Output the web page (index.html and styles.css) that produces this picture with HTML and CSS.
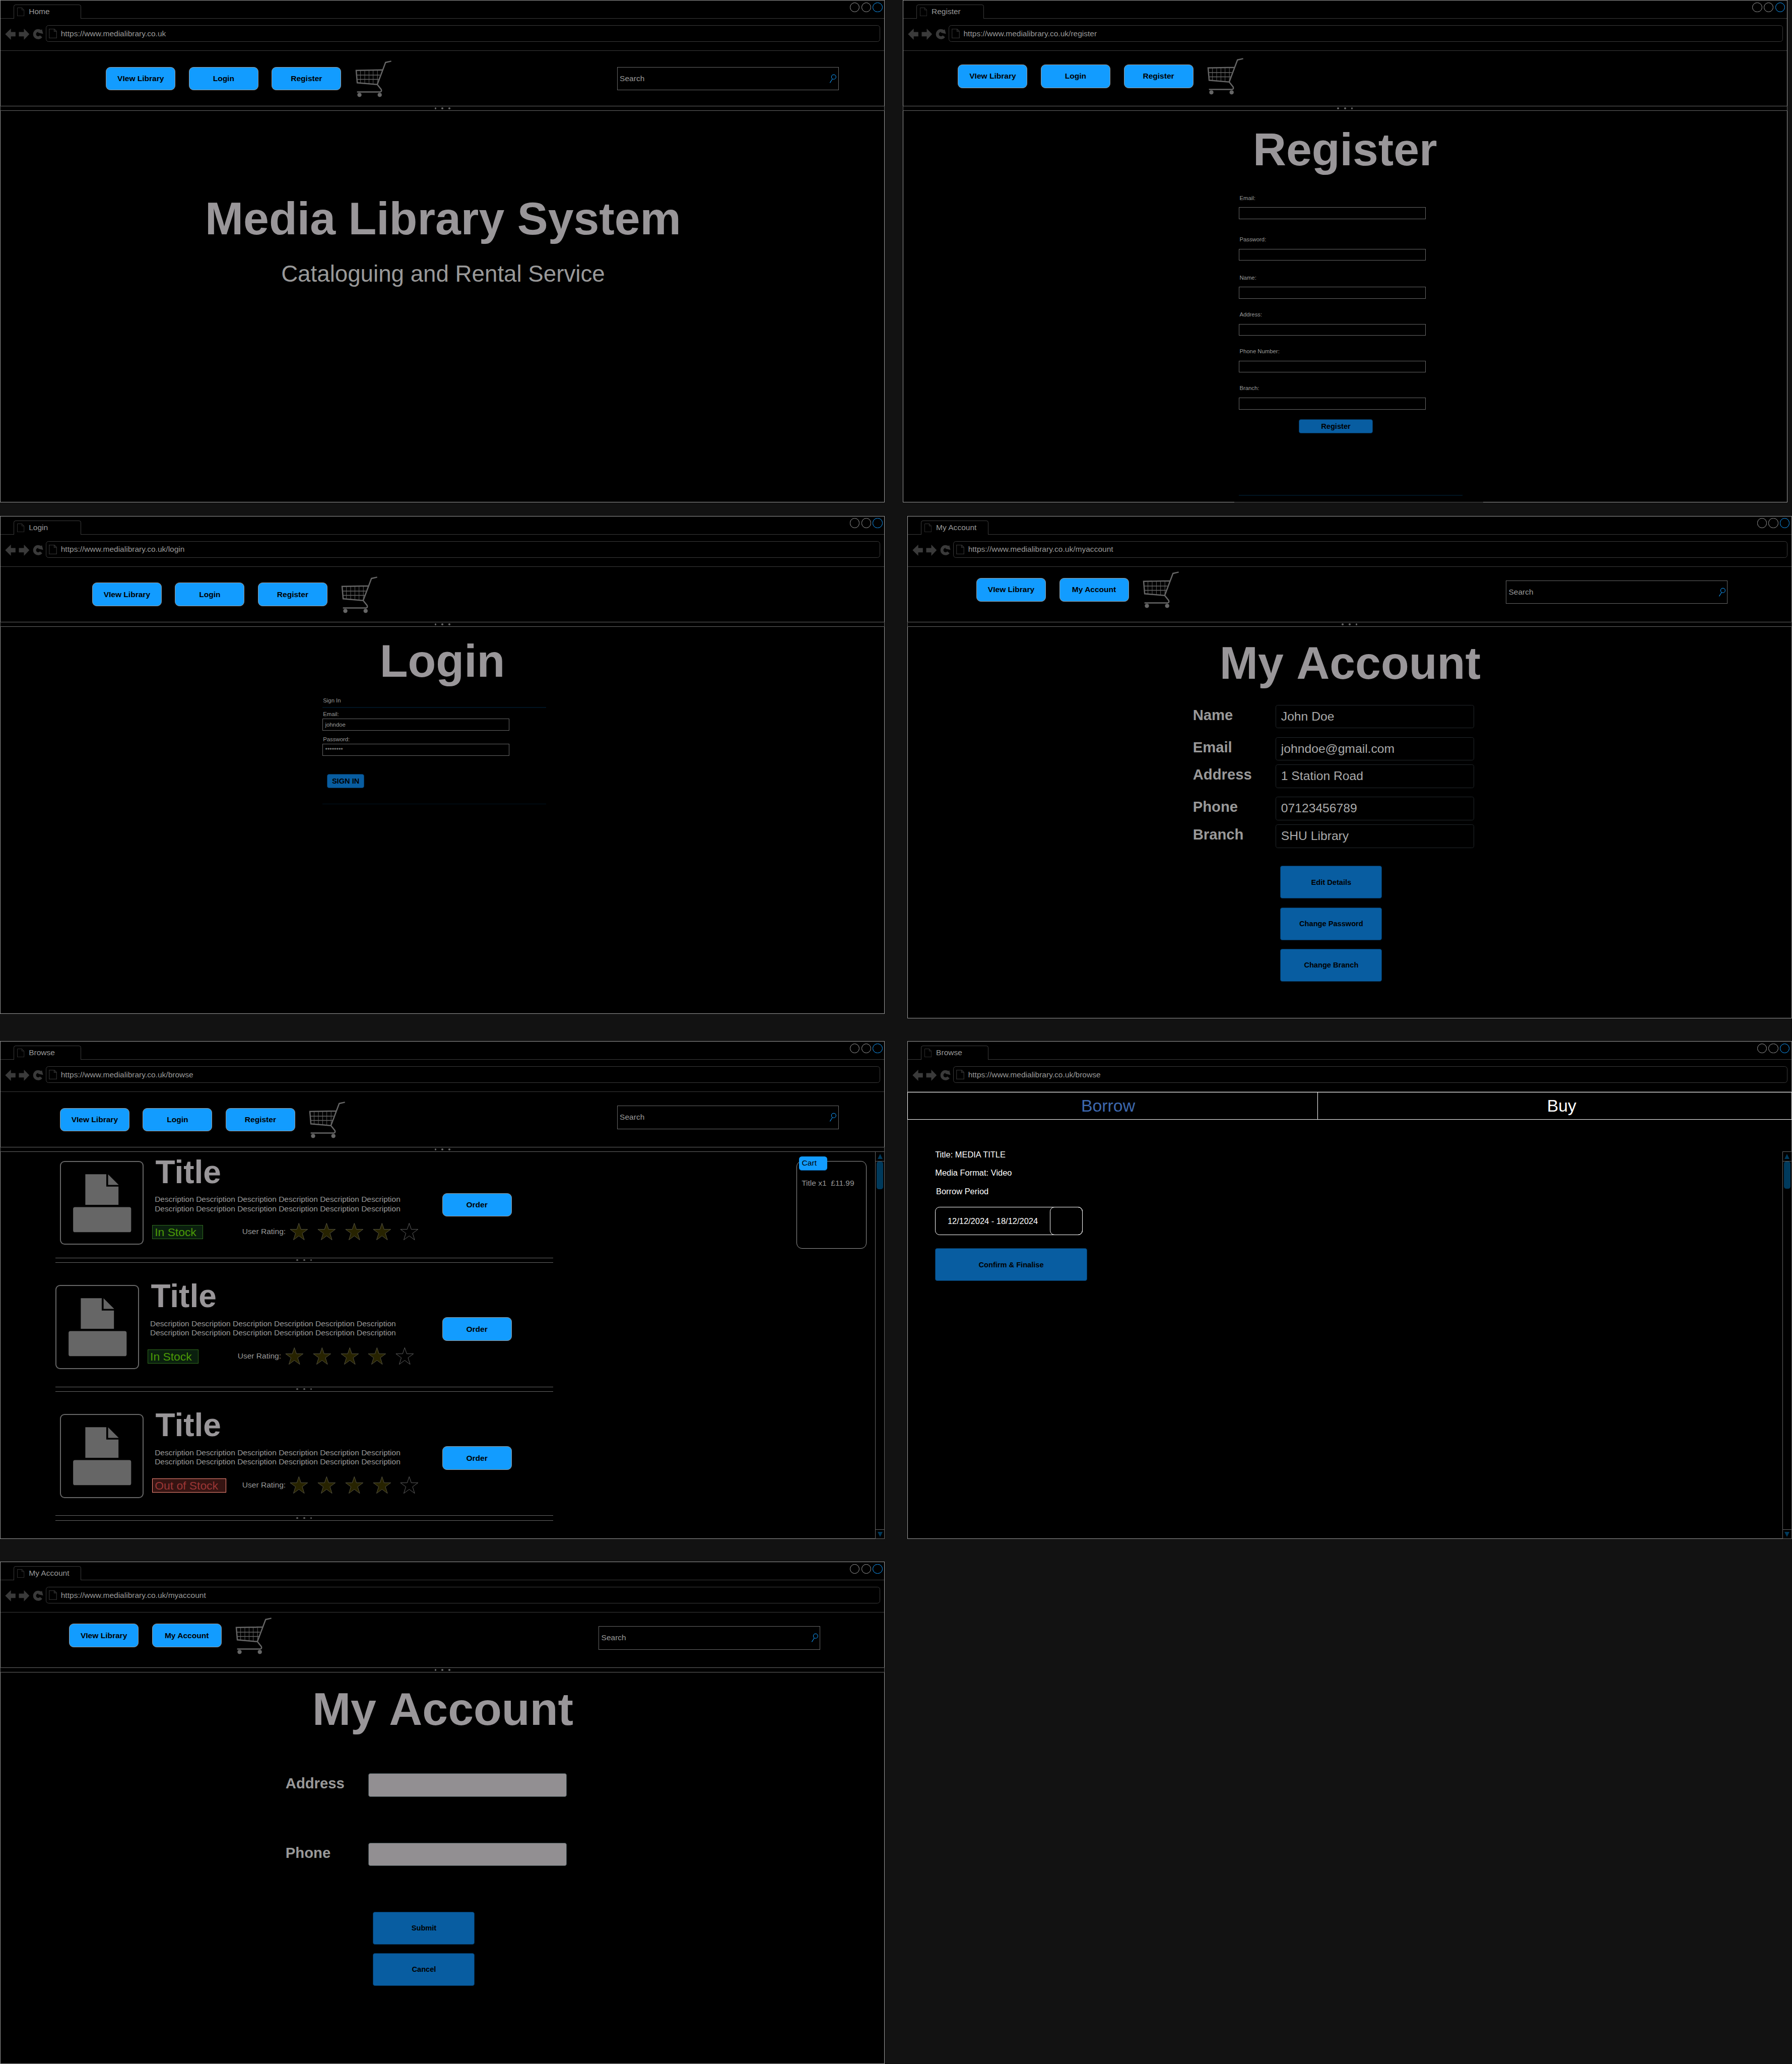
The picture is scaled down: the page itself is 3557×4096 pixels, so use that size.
FILE: index.html
```html
<!DOCTYPE html>
<html lang="en">
<head>
<meta charset="utf-8">
<title>Media Library System</title>
<link rel="stylesheet" href="styles.css">
</head>
<body>
<svg class="sprite" aria-hidden="true">
  <symbol id="page" viewBox="0 0 17 20"><path d="M.5 .5H11L16 5.500V19.300H.5ZM11 .5V5.500H16"/></symbol>
  <symbol id="controls" viewBox="0 0 100 36">
    <path d="M11.300 19.500 23.700 7.300V14.700H33.700V24.300H23.700V31.700ZM63.700 19.500 52 7.300V14.700H41V24.300H52V31.700ZM91 8.700 93.700 19 82.300 16Z"/>
    <path class="ring" d="M88.500 14A7.800 7.800 0 1 0 89.200 24"/>
  </symbol>
  <symbol id="cart" viewBox="0 0 80 80">
    <g fill="none">
      <path stroke-width="1" d="M11.600 22V50.500M20.800 22V51M30 22V51.500M39 21V52M48.400 21V52"/>
      <path stroke-width="1.800" d="M3 31.700H54M3.500 41H52"/>
      <path stroke-width="2.700" d="M78.400 1.500 66 4.300 48 52.300 4.500 48.500 2.200 21.500 59 20.500M48 52.300 56.300 62.500Q58.500 67 54.500 68.300H4"/>
    </g>
    <circle cx="9.300" cy="74.800" r="4.500" stroke="none"/><circle cx="53.300" cy="74.800" r="4.500" stroke="none"/>
  </symbol>
  <symbol id="lens" viewBox="0 0 16 20"><circle cx="9.700" cy="6.300" r="4.900"/><path d="M7 10.500 1.500 19"/></symbol>
  <symbol id="star" viewBox="0 0 40 40"><path d="M20 .5 24.500 13.800H39L27.300 22.400 31.800 36.700 20 28 8.200 36.700 12.700 22.400 1 13.800H15.500Z"/></symbol>
  <symbol id="media" viewBox="0 0 180 180"><path d="M54 27.500H99.500V54.500H126V94H54ZM103.500 28 126.500 51H103.500Z"/><rect x="27.500" y="99" width="126" height="54.500" rx="4"/></symbol>
</svg>

<main class="canvas">

<section class="window home">
  <div class="tabs"><div class="tab"><svg class="tab-page"><use href="#page"/></svg>Home</div><div class="dots"><i></i><i></i><i class="close"></i></div></div>
  <div class="address"><svg class="controls"><use href="#controls"/></svg><div class="url"><svg class="url-page"><use href="#page"/></svg>https://www.medialibrary.co.uk</div></div>
  <nav class="nav">
    <a class="btn">VIew Library</a><a class="btn">Login</a><a class="btn">Register</a><svg class="cart"><use href="#cart"/></svg>
    <div class="search">Search<svg class="lens"><use href="#lens"/></svg></div>
  </nav>
  <div class="splitter"><i></i><i></i><i></i></div>
  <h1>Media Library System</h1>
  <p class="subtitle">Cataloguing and Rental Service</p>
</section>

<section class="window register">
  <div class="tabs"><div class="tab"><svg class="tab-page"><use href="#page"/></svg>Register</div><div class="dots"><i></i><i></i><i class="close"></i></div></div>
  <div class="address"><svg class="controls"><use href="#controls"/></svg><div class="url"><svg class="url-page"><use href="#page"/></svg>https://www.medialibrary.co.uk/register</div></div>
  <nav class="nav">
    <a class="btn">VIew Library</a><a class="btn">Login</a><a class="btn">Register</a><svg class="cart"><use href="#cart"/></svg>
  </nav>
  <div class="splitter"><i></i><i></i><i></i></div>
  <h1>Register</h1>
  <form class="form">
    <label>Email:</label><div class="input"></div>
    <label class="gap-l">Password:</label><div class="input"></div>
    <label class="gap-m">Name:</label><div class="input"></div>
    <label class="gap-s">Address:</label><div class="input"></div>
    <label class="gap-s">Phone Number:</label><div class="input"></div>
    <label class="gap-s">Branch:</label><div class="input"></div>
    <div class="action">Register</div>
    <div class="rule"></div>
  </form>
  <div class="panel-edge"></div>
</section>

<section class="window login">
  <div class="tabs"><div class="tab"><svg class="tab-page"><use href="#page"/></svg>Login</div><div class="dots"><i></i><i></i><i class="close"></i></div></div>
  <div class="address"><svg class="controls"><use href="#controls"/></svg><div class="url"><svg class="url-page"><use href="#page"/></svg>https://www.medialibrary.co.uk/login</div></div>
  <nav class="nav">
    <a class="btn">VIew Library</a><a class="btn">Login</a><a class="btn">Register</a><svg class="cart"><use href="#cart"/></svg>
  </nav>
  <div class="splitter"><i></i><i></i><i></i></div>
  <h1>Login</h1>
  <form class="form">
    <div class="legend">Sign In</div>
    <div class="rule"></div>
    <label>Email:</label><div class="input">johndoe</div>
    <label class="second">Password:</label><div class="input">********</div>
    <div class="action">SIGN IN</div>
    <div class="rule last"></div>
  </form>
</section>

<section class="window account">
  <div class="tabs"><div class="tab"><svg class="tab-page"><use href="#page"/></svg>My Account</div><div class="dots"><i></i><i></i><i class="close"></i></div></div>
  <div class="address"><svg class="controls"><use href="#controls"/></svg><div class="url"><svg class="url-page"><use href="#page"/></svg>https://www.medialibrary.co.uk/myaccount</div></div>
  <nav class="nav">
    <a class="btn">VIew Library</a><a class="btn">My Account</a><svg class="cart"><use href="#cart"/></svg>
    <div class="search">Search<svg class="lens"><use href="#lens"/></svg></div>
  </nav>
  <div class="splitter"><i></i><i></i><i></i></div>
  <h1>My Account</h1>
  <div class="details">
    <div class="row"><b>Name</b><span class="value">John Doe</span></div>
    <div class="row wide"><b>Email</b><span class="value">johndoe@gmail.com</span></div>
    <div class="row"><b>Address</b><span class="value">1 Station Road</span></div>
    <div class="row wide"><b>Phone</b><span class="value">07123456789</span></div>
    <div class="row"><b>Branch</b><span class="value">SHU Library</span></div>
  </div>
  <div class="stack"><div class="big">Edit Details</div><div class="big">Change Password</div><div class="big">Change Branch</div></div>
</section>

<section class="window browse">
  <div class="tabs"><div class="tab"><svg class="tab-page"><use href="#page"/></svg>Browse</div><div class="dots"><i></i><i></i><i class="close"></i></div></div>
  <div class="address"><svg class="controls"><use href="#controls"/></svg><div class="url"><svg class="url-page"><use href="#page"/></svg>https://www.medialibrary.co.uk/browse</div></div>
  <nav class="nav">
    <a class="btn">VIew Library</a><a class="btn">Login</a><a class="btn">Register</a><svg class="cart"><use href="#cart"/></svg>
    <div class="search">Search<svg class="lens"><use href="#lens"/></svg></div>
  </nav>
  <div class="splitter"><i></i><i></i><i></i></div>
  <div class="content">
    <div class="list">
      <article class="item">
        <div class="thumb"><svg><use href="#media"/></svg></div>
        <div class="info">
          <h2>Title</h2>
          <p>Description Description Description Description Description Description<br>Description Description Description Description Description Description</p>
          <div class="meta"><div><span class="stock in">In Stock</span></div><span class="rating">User Rating:</span><div class="stars"><svg><use href="#star"/></svg><svg><use href="#star"/></svg><svg><use href="#star"/></svg><svg><use href="#star"/></svg><svg class="empty"><use href="#star"/></svg></div></div>
        </div>
        <a class="btn order">Order</a>
      </article>
      <div class="divider first"><i></i><i></i><i></i></div>
      <article class="item shifted">
        <div class="thumb"><svg><use href="#media"/></svg></div>
        <div class="info">
          <h2>Title</h2>
          <p>Description Description Description Description Description Description<br>Description Description Description Description Description Description</p>
          <div class="meta"><div><span class="stock in">In Stock</span></div><span class="rating">User Rating:</span><div class="stars"><svg><use href="#star"/></svg><svg><use href="#star"/></svg><svg><use href="#star"/></svg><svg><use href="#star"/></svg><svg class="empty"><use href="#star"/></svg></div></div>
        </div>
        <a class="btn order">Order</a>
      </article>
      <div class="divider"><i></i><i></i><i></i></div>
      <article class="item">
        <div class="thumb"><svg><use href="#media"/></svg></div>
        <div class="info">
          <h2>Title</h2>
          <p>Description Description Description Description Description Description<br>Description Description Description Description Description Description</p>
          <div class="meta"><div><span class="stock out">Out of Stock</span></div><span class="rating">User Rating:</span><div class="stars"><svg><use href="#star"/></svg><svg><use href="#star"/></svg><svg><use href="#star"/></svg><svg><use href="#star"/></svg><svg class="empty"><use href="#star"/></svg></div></div>
        </div>
        <a class="btn order">Order</a>
      </article>
      <div class="divider"><i></i><i></i><i></i></div>
    </div>
    <aside class="basket"><span class="tag">Cart</span>Title x1&nbsp; £11.99</aside>
    <div class="scroll"><div class="cap up"></div><div class="thumb-bar"></div><div class="cap down"></div></div>
  </div>
</section>

<section class="window borrow">
  <div class="tabs"><div class="tab"><svg class="tab-page"><use href="#page"/></svg>Browse</div><div class="dots"><i></i><i></i><i class="close"></i></div></div>
  <div class="address"><svg class="controls"><use href="#controls"/></svg><div class="url"><svg class="url-page"><use href="#page"/></svg>https://www.medialibrary.co.uk/browse</div></div>
  <div class="modes"><div class="mode active">Borrow</div><div class="mode buy">Buy</div></div>
  <div class="content">
    <div class="loan">
      <p>Title: MEDIA TITLE</p>
      <p>Media Format: Video</p>
      <p class="period">Borrow Period</p>
      <div class="date"><span>12/12/2024 - 18/12/2024</span><i></i></div>
      <div class="big">Confirm &amp; Finalise</div>
    </div>
    <div class="scroll"><div class="cap up"></div><div class="thumb-bar"></div><div class="cap down"></div></div>
  </div>
</section>

<section class="window edit">
  <div class="tabs"><div class="tab"><svg class="tab-page"><use href="#page"/></svg>My Account</div><div class="dots"><i></i><i></i><i class="close"></i></div></div>
  <div class="address"><svg class="controls"><use href="#controls"/></svg><div class="url"><svg class="url-page"><use href="#page"/></svg>https://www.medialibrary.co.uk/myaccount</div></div>
  <nav class="nav">
    <a class="btn">VIew Library</a><a class="btn">My Account</a><svg class="cart"><use href="#cart"/></svg>
    <div class="search">Search<svg class="lens"><use href="#lens"/></svg></div>
  </nav>
  <div class="splitter"><i></i><i></i><i></i></div>
  <h1>My Account</h1>
  <div class="details">
    <div class="row"><b>Address</b><span class="value"></span></div>
    <div class="row"><b>Phone</b><span class="value"></span></div>
  </div>
  <div class="stack"><div class="big">Submit</div><div class="big">Cancel</div></div>
</section>

</main>
</body>
</html>
```

FILE: styles.css
```css
/* 1rem is ten design units */
html { font-size: 9.1416px; background: #121212; }
* { box-sizing: border-box; }
body { margin: 0; color: #999; font: 1.7rem/2rem "Liberation Sans", Arial, sans-serif; }
h1, h2, p { margin: 0; }
i { display: block; }
svg { display: block; flex: none; }
.sprite { position: absolute; width: 0; height: 0; }
.canvas { position: relative; width: 3557px; height: 4096px; overflow: hidden; }

/* windows placed on the board */
.window { position: absolute; width: 192.1rem; height: 109.1rem; background: #000; outline: 1px solid #999; outline-offset: -1px; display: flex; flex-direction: column; }
.home { left: 0; top: 0; --nav-x: 23rem; --nav-y: 3.4rem; --search-y: 3.4rem; --search-r: 10rem; }
.register { left: 196rem; top: 0; --nav-x: 12rem; --nav-y: 2.9rem; }
.login { left: 0; top: 112rem; height: 108.1rem; --nav-x: 20rem; --nav-y: 3.4rem; }
.account { left: 197rem; top: 112rem; --nav-x: 15rem; --nav-y: 2.4rem; --search-y: 2.9rem; --search-r: 14rem; }
.browse { left: 0; top: 226rem; height: 108.1rem; --nav-x: 13rem; --nav-y: 3.4rem; --search-y: 2.9rem; --search-r: 10rem; }
.borrow { left: 197rem; top: 226rem; height: 108.1rem; }
.edit { left: 0; top: 339rem; --nav-x: 15rem; --nav-y: 2.4rem; --search-y: 2.9rem; --search-r: 14rem; }

/* browser chrome */
.tabs { flex: none; height: 4.1rem; padding: 0 .5rem 0 3rem; border-bottom: 1px solid #3a3a3a; display: flex; justify-content: space-between; }
.tab { width: 14.6rem; height: 3.1rem; margin-top: 1rem; padding: 0 0 .1rem .6rem; border: 1px solid #3a3a3a; border-bottom: 0; border-radius: .5rem .5rem 0 0; background: #000; display: flex; align-items: center; gap: .95rem; }
.tab-page { width: 1.6rem; height: 1.9rem; margin-top: .1rem; fill: none; stroke: #3a3a3a; stroke-width: 1; }
.dots { display: flex; gap: .4rem; padding-top: .5rem; }
.dots i { width: 2.1rem; height: 2.1rem; border: 1px solid #999; border-radius: 50%; }
.dots .close { border-color: #129cff; }
.address { flex: none; height: 7rem; padding-top: 1.4rem; border-bottom: 1px solid #3a3a3a; display: flex; align-items: flex-start; }
.controls { width: 10rem; height: 3.6rem; fill: #3a3a3a; }
.ring { fill: none; stroke: #3a3a3a; stroke-width: 6.400; }
.url { width: 181.1rem; height: 3.6rem; padding: 0 0 0 .5rem; border: 1px solid #3a3a3a; border-radius: .6rem; display: flex; align-items: center; gap: .8rem; }
.url-page { width: 1.8rem; height: 2.1rem; fill: none; stroke: #2b2b2b; stroke-width: 1.700; }

.nav { flex: none; height: 11.9rem; padding-left: var(--nav-x); display: flex; gap: 2.9rem; align-items: flex-start; }
.btn { width: 15.1rem; height: 5.1rem; border: 1px solid #999; border-radius: 1rem; background: #129cff; color: #000; font-weight: bold; display: flex; align-items: center; justify-content: center; }
.nav .btn { margin-top: var(--nav-y); }
.cart { width: 8rem; height: 8rem; margin: calc(var(--nav-y) - 1.4rem) 0 0 .1rem; fill: #666; stroke: #666; }
.search { width: 48.1rem; height: 5.1rem; margin: var(--search-y) var(--search-r) 0 auto; padding: 0 .3rem 0 .45rem; border: 1px solid #666; display: flex; align-items: center; justify-content: space-between; }
.lens { width: 1.6rem; height: 2rem; fill: none; stroke: #129cff; stroke-width: 1.100; }

.splitter, .divider { display: flex; align-items: center; justify-content: center; gap: 1.1rem; height: 1.1rem; border: 1px solid #666; }
.splitter { flex: none; position: relative; z-index: 1; }
.splitter i, .divider i { width: .4rem; height: .4rem; border-radius: 50%; background: #666; }

h1 { font-size: 10rem; line-height: 12rem; text-align: center; color: #999699; font-kerning: none; }
.home h1 { margin-top: 17.4rem; padding-left: .3rem; }
.register h1 { margin-top: 2.4rem; }
.login h1 { margin-top: 1.4rem; }
.account h1, .edit h1 { margin-top: 1.9rem; padding-left: .2rem; }
.subtitle { margin-top: 3.1rem; padding-left: .3rem; font-size: 5rem; line-height: 6rem; text-align: center; }

/* small forms */
.form { font-size: 1.24rem; }
.form label, .legend { display: block; padding-left: .15rem; line-height: 2rem; }
.input { width: 40.6rem; height: 2.6rem; padding-left: .5rem; border: 1px solid #666; line-height: 2.5rem; }
.action { height: 3.1rem; border: 1px solid #06355c; border-radius: .5rem; background: #085da1; color: #000; font-weight: bold; font-size: 1.6rem; display: flex; align-items: center; justify-content: center; }
.rule { width: 48.6rem; height: .2rem; background: #001422; }
.register .form { margin: 3.5rem 0 0 73rem; }
.register .input { margin-top: 1rem; }
.register .gap-l { margin-top: 3.4rem; }
.register .gap-m { margin-top: 2.7rem; }
.register .gap-s { margin-top: 2.4rem; }
.register .action { width: 16.1rem; margin: 2.1rem 0 13.35rem 13rem; }
.panel-edge { position: absolute; z-index: 1; left: 72rem; bottom: 0; width: 54rem; height: 1px; background: #4d4d4d; }
.login .form { margin: 1.6rem 0 0 70rem; }
.login .rule { margin-top: .35rem; }
.login .form label { margin-top: .45rem; line-height: 1.9rem; }
.login .form .second { margin-top: 1rem; }
.login .action { width: 8.1rem; margin: 3.9rem 0 0 1rem; }
.login .last { margin-top: 3.35rem; }

/* account details */
.details { display: flex; flex-direction: column; padding-left: 62rem; }
.account .details { margin-top: 3rem; gap: .9rem; }
.account .wide { margin-top: 1rem; }
.edit .details { margin-top: 8rem; gap: 9.9rem; }
.row { display: flex; }
.row b { width: 18rem; font-size: 3.2rem; line-height: 4.4rem; }
.value { width: 43.1rem; height: 5.1rem; padding-left: 1.05rem; border: 1px solid #22272b; border-radius: .5rem; color: #aaa; font-size: 2.7rem; line-height: 4.9rem; }
.edit .value { background: #928f92; border-color: #3b4a4c; }
.stack { display: flex; flex-direction: column; gap: 1.9rem; margin: 3.9rem 0 0 81rem; }
.edit .stack { margin-top: 9.9rem; }
.big { width: 22.1rem; height: 7.1rem; border: 1px solid #06355c; border-radius: .5rem; background: #085da1; color: #000; font-weight: bold; font-size: 1.6rem; display: flex; align-items: center; justify-content: center; }

/* browse */
.content { flex: 1; display: flex; align-items: flex-start; }
.list { width: 120.1rem; padding-top: 1.9rem; }
.item { display: flex; padding-left: 13rem; }
.shifted { padding-left: 12rem; }
.thumb { width: 18.2rem; height: 18.2rem; margin: 0 -.1rem -.1rem 0; border: 2px solid #666; border-radius: 1rem; display: flex; align-items: center; justify-content: center; }
.thumb svg { width: 18rem; height: 18rem; fill: #666; }
.info { width: 62.5rem; margin-left: 2.4rem; }
.shifted .info { width: 63.5rem; }
.item h2 { margin-left: .25rem; font-size: 7rem; line-height: 5rem; color: #999699; }
.item p { margin-top: 2.4rem; padding-left: .1rem; white-space: nowrap; }
.meta { display: grid; grid-template-columns: 19.5rem 10.4rem auto; justify-content: start; align-items: center; height: 4rem; margin: 2.1rem 0 0 -.5rem; }
.stock { display: inline-block; height: 3.1rem; padding: 0 0 0 .5rem; border: 1px solid; font-size: 2.5rem; line-height: 2.9rem; vertical-align: middle; }
.in { width: 11.1rem; border-color: #2e6b1d; background: #0a1f0e; color: #4b9a06; }
.out { width: 16.1rem; border-color: #ff8c7c; background: #351412; color: #9b3636; }
.rating { padding: 0 0 .2rem .1rem; white-space: nowrap; }
.stars { display: flex; gap: 2rem; fill: #272300; stroke: #5c5a45; stroke-width: 1; }
.stars svg { width: 4rem; height: 4rem; }
.stars .empty { fill: none; stroke: #666; }
.order { margin-top: 7rem; flex: none; }
.divider { margin: 3.9rem 0 4.9rem 12rem; border-width: 1px 0; }
.divider.first { margin-top: 2.9rem; }
.basket { position: relative; width: 15.1rem; height: 19.1rem; margin: 1.9rem 0 0 52.9rem; padding: 3.8rem 0 0 .95rem; border: 1px solid #999; border-radius: 1.2rem; white-space: nowrap; }
.tag { position: absolute; left: .4rem; top: -1.1rem; width: 6.1rem; height: 3.1rem; padding-left: .6rem; border-bottom: 1px solid #085da1; border-radius: .6rem; background: #129cff; color: #000; line-height: 2.9rem; }
.scroll { position: relative; z-index: 1; width: 2.1rem; height: 84.1rem; margin: -.1rem 0 0 auto; border: 1px solid #666; display: flex; flex-direction: column; align-items: center; }
.cap { width: 100%; height: 2rem; display: flex; align-items: center; justify-content: center; }
.cap::before { content: ""; border: .6rem solid transparent; border-top-width: 0; border-bottom: 1.1rem solid #003a5c; }
.up { border-bottom: 1px solid #666; }
.down { margin-top: auto; border-top: 1px solid #666; }
.down::before { transform: rotate(180deg); }
.thumb-bar { width: 1.4rem; height: 6rem; border-radius: .5rem; background: #003a5c; }

/* borrow */
.modes { flex: none; position: relative; z-index: 1; height: 6.1rem; margin-top: -.1rem; border: 1px solid #fff; display: grid; grid-template-columns: 89.1rem 1fr; color: #fff; font-size: 3.7rem; line-height: 5.9rem; text-align: center; }
.active { padding-right: 2rem; border-right: 1px solid #fff; color: #3e68ad; }
.buy { padding-left: 3rem; }
.loan { padding: 6.5rem 0 0 6rem; color: #fff; font-size: 1.8rem; }
.loan p { padding-left: .05rem; margin-bottom: 2rem; }
.loan .period { padding-left: .25rem; margin-bottom: 2.4rem; }
.date { width: 32.1rem; height: 6.1rem; margin-bottom: 2.9rem; border: 1px solid #fff; border-radius: 1rem; display: flex; align-items: center; text-align: center; }
.date span { flex: 1; }
.date i { width: 7.1rem; height: 6.1rem; margin-right: -1px; border: 1px solid #fff; border-radius: 1rem; }
.loan .big { width: 33.1rem; }
.borrow .scroll { margin-top: 6.9rem; }
```
